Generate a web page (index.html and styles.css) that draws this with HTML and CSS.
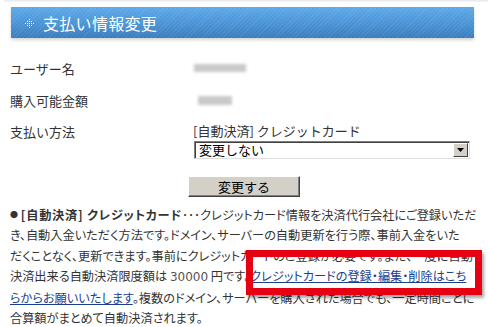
FILE: index.html
```html
<!DOCTYPE html>
<html lang="ja">
<head>
<meta charset="utf-8">
<link rel="stylesheet" href="styles.css">
</head>
<body>
<div class="page">
  <div class="topline"></div>
  <h1 class="header">
    <svg class="hicon" width="9" height="9" viewBox="0 0 9 9">
      <g fill="#dfeeff">
        <rect x="4" y="0" width="1" height="1"/>
        <rect x="2" y="2" width="1" height="1"/><rect x="4" y="2" width="1" height="1"/><rect x="6" y="2" width="1" height="1"/>
        <rect x="0" y="4" width="1" height="1"/><rect x="2" y="4" width="1" height="1"/><rect x="4" y="4" width="1" height="1"/><rect x="6" y="4" width="1" height="1"/><rect x="8" y="4" width="1" height="1"/>
        <rect x="2" y="6" width="1" height="1"/><rect x="4" y="6" width="1" height="1"/><rect x="6" y="6" width="1" height="1"/>
        <rect x="4" y="8" width="1" height="1"/>
      </g>
    </svg>
    <span>支払い情報変更</span>
  </h1>

  <div class="form">
    <div class="label">ユーザー名</div>
    <div class="value"><span class="blur b1"></span></div>
    <div class="label">購入可能金額</div>
    <div class="value"><span class="blur b2"></span></div>
    <div class="label label-top">支払い方法</div>
    <div class="value method">
      <div class="current">[自動決済] クレジットカード</div>
      <div class="select">
        <span class="sel-text">変更しない</span>
        <span class="sel-btn"><svg width="7" height="4" viewBox="0 0 7 4"><path d="M0 0H7L3.5 4Z" fill="#000"/></svg></span>
      </div>
    </div>
  </div>

  <div class="actions"><button class="btn">変更する</button></div>

  <div class="note">
    <p class="text"><span class="dot">●</span> <b>[自動決済] クレジットカード</b>･･･クレジットカード情報を決済代行会社にご登録いただ<br>き、自動入金いただく方法です。ドメイン、サーバーの自動更新を行う際、事前入金をいた<br>だくことなく、更新できます。事前にクレジットカードのご登録が必要です。また、一度に自動<br>決済出来る自動決済限度額は <span class="num">30000</span> 円です。<a href="#">クレジットカードの登録・編集・削除はこち<br>らからお願いいたします</a>。複数のドメイン、サーバーを購入された場合でも、一定時間ごとに<br>合算額がまとめて自動決済されます。</p>
    <div class="redbox"></div>
  </div>
</div>
</body>
</html>
```

FILE: styles.css
```css
html, body {
  margin: 0;
  padding: 0;
  background: #fff;
}
body {
  width: 488px;
  height: 327px;
  overflow: hidden;
  font-family: "Noto Sans CJK JP", "Liberation Sans", sans-serif;
  color: #333;
  font-size: 13px;
}
.page {
  position: relative;
}
.topline {
  height: 2px;
  margin: 0 0 0 4px;
  background: linear-gradient(#e4e8ec, #f6f7f8);
}
.header {
  margin: 5px 14px 0 11px;
  height: 31px;
  display: flex;
  align-items: center;
  gap: 9px;
  padding-left: 14px;
  box-sizing: border-box;
  font-size: 16px;
  font-weight: normal;
  color: #fff;
  letter-spacing: 0.3px;
  background:
    repeating-linear-gradient(135deg, rgba(255,255,255,0.07) 0 1px, rgba(255,255,255,0) 1px 3px),
    linear-gradient(#5eaaea, #4a93d5 55%, #3b7dbd);
  box-shadow: 0 2px 3px rgba(0,0,0,0.18);
}
.hicon { flex: none; margin-top: 1px; }
.form {
  display: grid;
  grid-template-columns: 183px 1fr;
  grid-template-rows: 32px 32px auto;
  margin-top: 14px;
  padding-left: 10px;
  padding-right: 18px;
}
.label, .value {
  display: flex;
  align-items: center;
}
.label-top {
  align-items: flex-start;
  padding-top: 7px;
  line-height: 18px;
}
.blur {
  display: block;
  background: #c9c9c9;
  filter: blur(1.5px);
}
.b1 { width: 52px; height: 8px; margin-left: 1px; }
.b2 { width: 34px; height: 9px; margin-left: 5px; }
.method {
  flex-direction: column;
  align-items: stretch;
  justify-content: flex-start;
  padding-top: 6px;
}
.current {
  line-height: 18px;
  height: 18px;
}
.select {
  margin-top: 1px;
  height: 18px;
  box-sizing: border-box;
  border: 1px solid;
  border-color: #808080 #e0e0e0 #e0e0e0 #808080;
  box-shadow: inset 1px 1px 0 #404040;
  background: #fff;
  display: flex;
  align-items: center;
  justify-content: space-between;
  color: #000;
  padding-left: 4px;
  margin-left: 1px;
}
.sel-text { line-height: 14px; }
.sel-btn {
  width: 15px;
  height: 14px;
  margin-right: 1px;
  box-sizing: border-box;
  background: #d4d0c8;
  border: 1px solid;
  border-color: #fff #404040 #404040 #fff;
  display: flex;
  align-items: center;
  justify-content: center;
}
.actions {
  display: flex;
  justify-content: center;
  margin-top: 17px;
}
.btn {
  width: 112px;
  height: 21px;
  background: #d4d0c8;
  border: 1px solid;
  border-color: #fff #404040 #404040 #fff;
  box-shadow: inset -1px -1px 0 #808080;
  font-family: "Noto Sans CJK JP", sans-serif;
  font-size: 13px;
  color: #000;
  padding: 0;
  line-height: 17px;
}
.note {
  position: relative;
  margin-top: 8px;
  padding-left: 10px;
}
.text {
  margin: 0;
  line-height: 20.4px;
  font-size: 12.2px;
  white-space: nowrap;
  font-feature-settings: "palt";
}
.dot { color: #333; font-size: 8px; vertical-align: 2px; }
.text b { font-weight: bold; letter-spacing: 0.8px; }
.num { font-family: "DejaVu Sans", sans-serif; font-size: 12px; color: #555; }
.text a {
  color: #1b3f8c;
  text-decoration: underline;
}
.redbox {
  position: absolute;
  left: 246px;
  top: 45px;
  width: 236px;
  height: 45px;
  box-sizing: border-box;
  border: 7px solid #e60012;
  box-shadow: 2px 3px 3px rgba(0,0,0,0.35);
}
```
